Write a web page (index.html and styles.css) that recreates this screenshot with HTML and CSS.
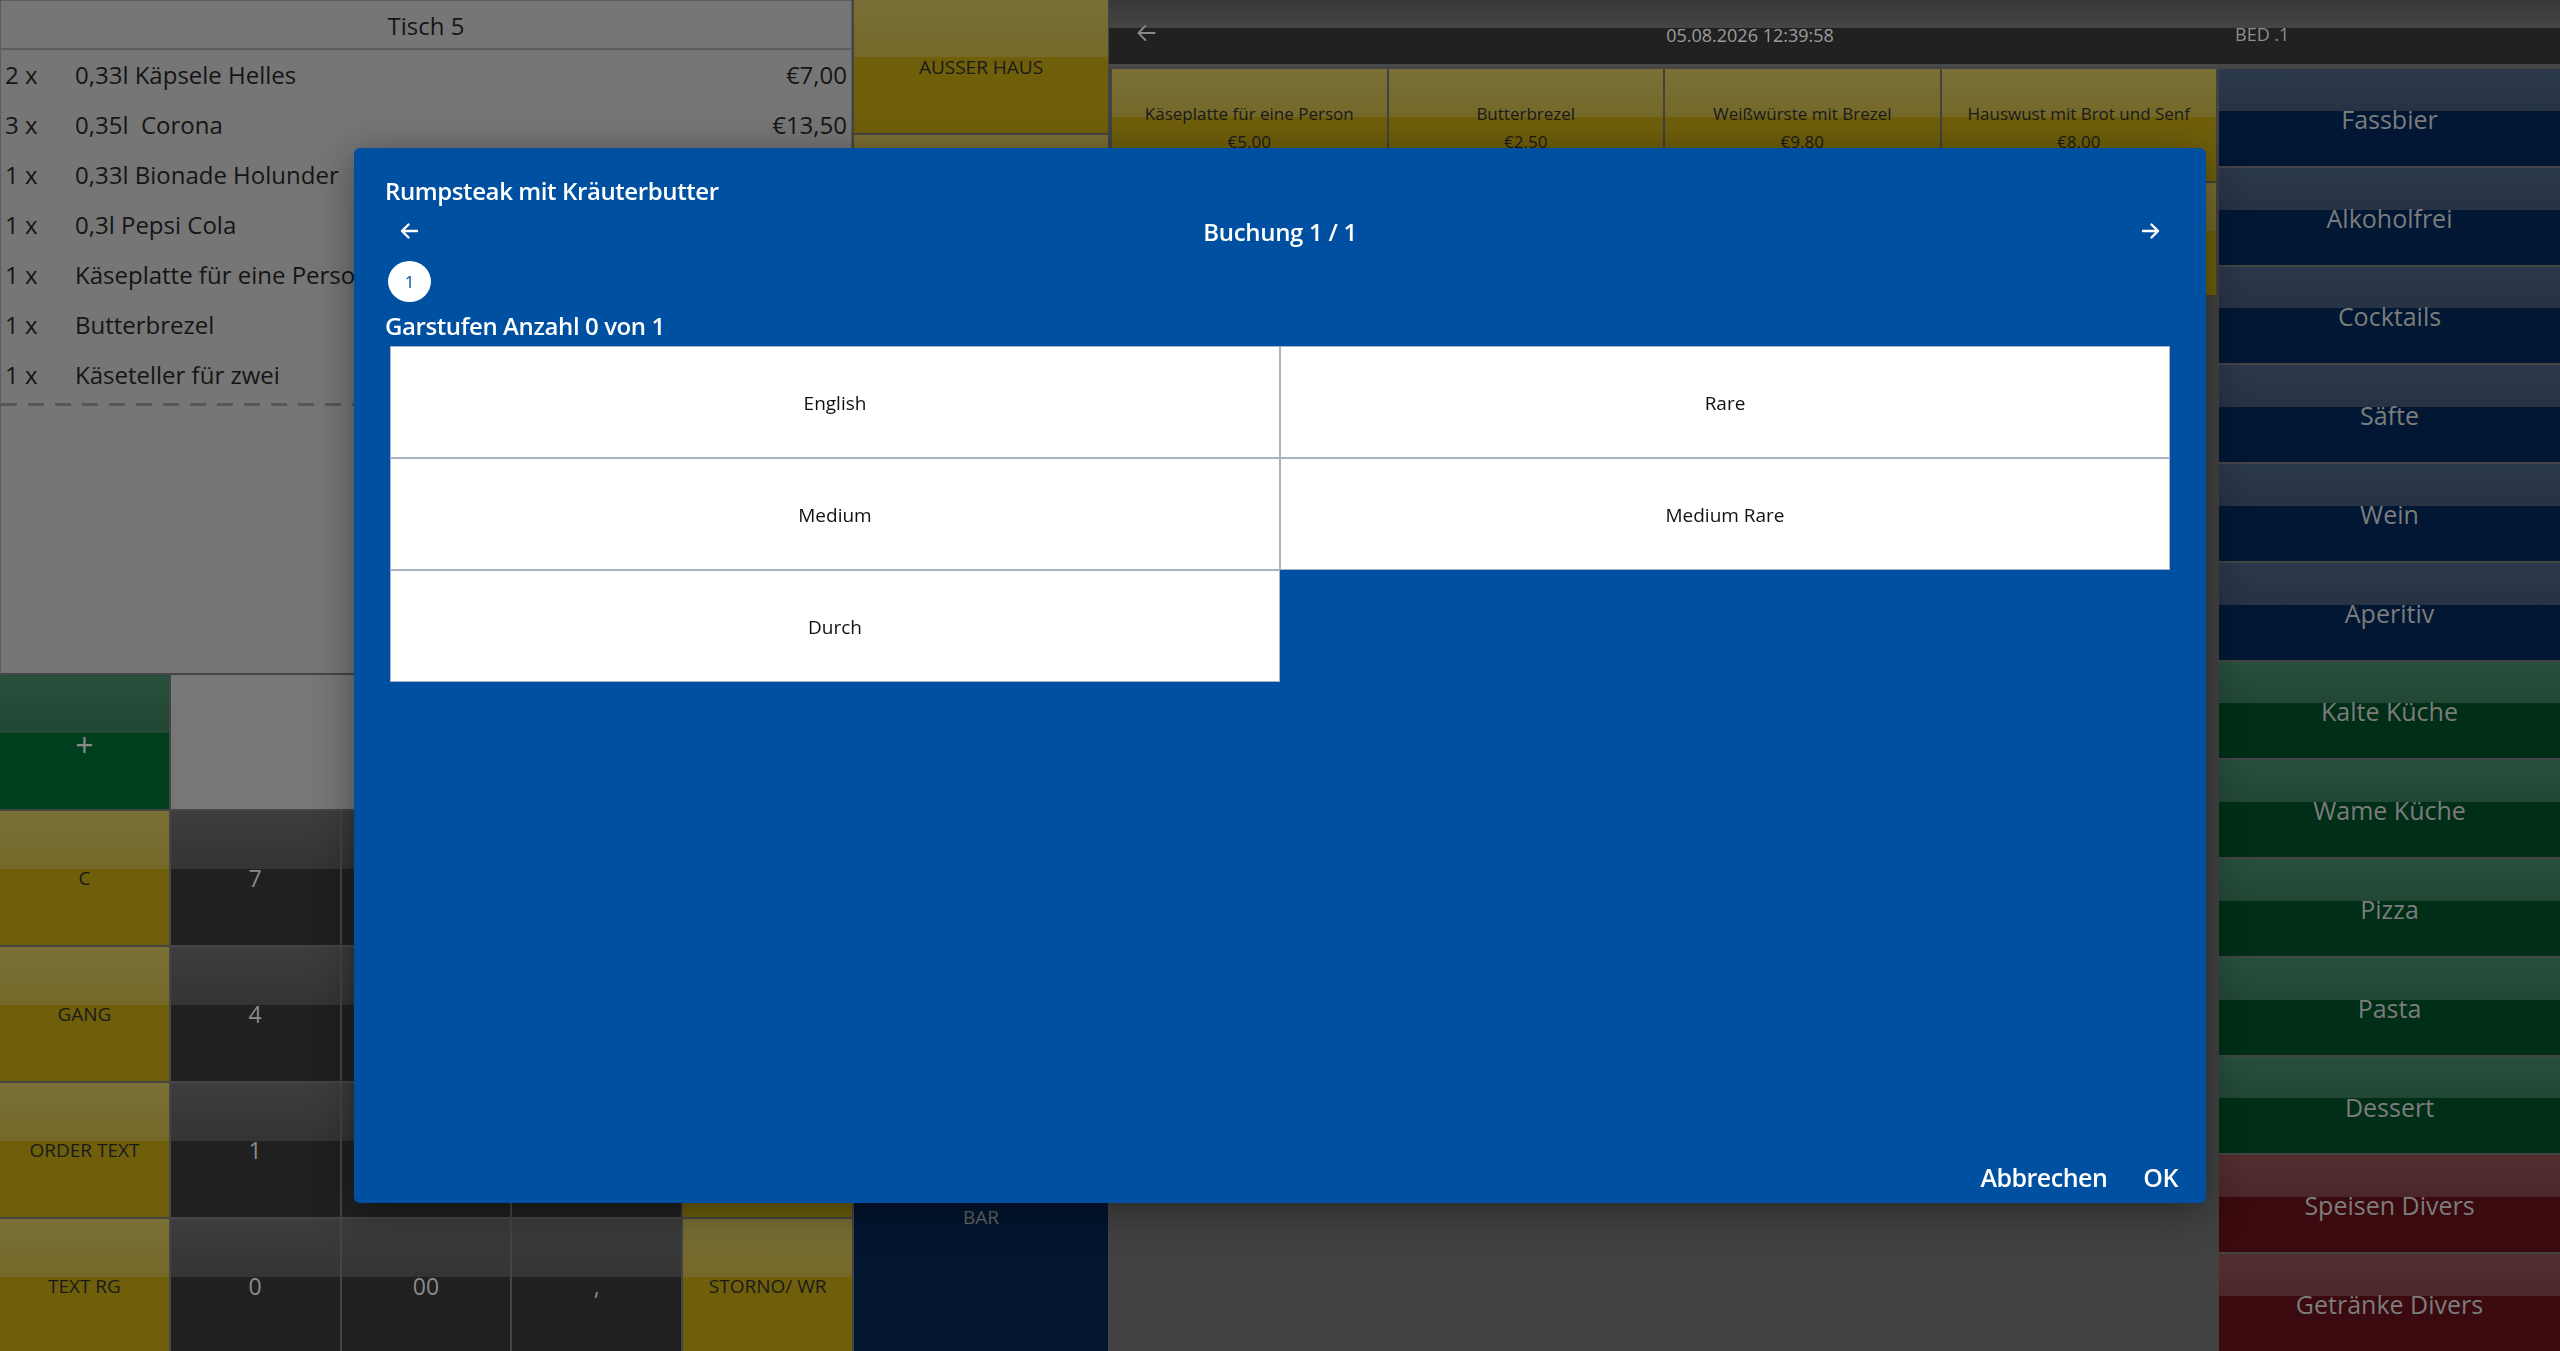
FILE: index.html
```html
<!DOCTYPE html>
<html lang="de">
<head>
  <meta charset="UTF-8">
  <title>Kasse - Tisch 5</title>
  <link rel="stylesheet" href="styles.css">
</head>
<body>
  <div class="pos">

    <!-- order + keypad -->
    <section class="left">
      <div class="order">
        <div class="order-head">Tisch 5</div>
        <ul class="lines">
          <li><span class="qty">2 x</span><span class="name">0,33l Käpsele Helles</span><span class="price">€7,00</span></li>
          <li><span class="qty">3 x</span><span class="name">0,35l&nbsp; Corona</span><span class="price">€13,50</span></li>
          <li><span class="qty">1 x</span><span class="name">0,33l Bionade Holunder</span><span class="price">€3,20</span></li>
          <li><span class="qty">1 x</span><span class="name">0,3l Pepsi Cola</span><span class="price">€2,90</span></li>
          <li><span class="qty">1 x</span><span class="name">Käseplatte für eine Person</span><span class="price">€5,00</span></li>
          <li><span class="qty">1 x</span><span class="name">Butterbrezel</span><span class="price">€2,50</span></li>
          <li><span class="qty">1 x</span><span class="name">Käseteller für zwei</span><span class="price">€9,50</span></li>
        </ul>
        <div class="dash"></div>
      </div>

      <div class="keys">
        <button class="key green plus">+</button>
        <div class="display"></div>

        <button class="key gold">C</button>
        <button class="key num">7</button>
        <button class="key num">8</button>
        <button class="key num">9</button>
        <button class="key gold">MENGE</button>

        <button class="key gold">GANG</button>
        <button class="key num">4</button>
        <button class="key num">5</button>
        <button class="key num">6</button>
        <button class="key gold">PREIS</button>

        <button class="key gold">ORDER TEXT</button>
        <button class="key num">1</button>
        <button class="key num">2</button>
        <button class="key num">3</button>
        <button class="key gold">SPLIT</button>

        <button class="key gold">TEXT RG</button>
        <button class="key num">0</button>
        <button class="key num">00</button>
        <button class="key num">,</button>
        <button class="key gold">STORNO/ WR</button>
      </div>
    </section>

    <!-- function column -->
    <section class="mid">
      <button class="key gold">AUSSER HAUS</button>
      <button class="key gold">TISCH</button>
      <button class="key gold">UMBUCHEN</button>
      <button class="key gold">RABATT</button>
      <button class="key gold">BON</button>
      <button class="key gold">ZWISCHEN</button>
      <button class="key gold">RECHNUNG</button>
      <button class="key gold">KARTE</button>
      <button class="key bar">BAR</button>
    </section>

    <section class="main">
      <header class="topbar">
        <span class="tb-back">
          <svg viewBox="0 0 24 24" width="26" height="26"><path d="M20 12H5M11.5 5.5 5 12l6.5 6.5" fill="none" stroke="currentColor" stroke-width="1.7" stroke-linecap="round" stroke-linejoin="round"/></svg>
        </span>
        <span class="tb-date">05.08.2026 12:39:58</span>
        <span class="tb-user">BED .1</span>
      </header>

      <div class="work">
        <div class="products">
          <button class="key gold item"><span>Käseplatte für eine Person</span><span>€5.00</span></button>
          <button class="key gold item"><span>Butterbrezel</span><span>€2.50</span></button>
          <button class="key gold item"><span>Weißwürste mit Brezel</span><span>€9.80</span></button>
          <button class="key gold item"><span>Hauswust mit Brot und Senf</span><span>€8.00</span></button>
          <button class="key gold item"><span>Obatzda mit Brezel</span><span>€6.50</span></button>
          <button class="key gold item"><span>Wurstsalat</span><span>€7.20</span></button>
          <button class="key gold item"><span>Leberkäse mit Ei</span><span>€8.40</span></button>
          <button class="key gold item"><span>Brotzeitbrett</span><span>€12.00</span></button>
        </div>

        <nav class="groups">
          <button class="key navy">Fassbier</button>
          <button class="key navy">Alkoholfrei</button>
          <button class="key navy">Cocktails</button>
          <button class="key navy">Säfte</button>
          <button class="key navy">Wein</button>
          <button class="key navy">Aperitiv</button>
          <button class="key green">Kalte Küche</button>
          <button class="key green">Wame Küche</button>
          <button class="key green">Pizza</button>
          <button class="key green">Pasta</button>
          <button class="key green">Dessert</button>
          <button class="key red">Speisen Divers</button>
          <button class="key red">Getränke Divers</button>
        </nav>
      </div>
    </section>
  </div>

  <!-- Garstufen dialog -->
  <div class="modal">
    <div class="dialog">
      <div class="dlg-title">Rumpsteak mit Kräuterbutter</div>
      <div class="dlg-nav">
        <button class="arrow">
          <svg viewBox="0 0 24 24" width="24" height="24"><path d="M20 12H5M11.5 5.5 5 12l6.5 6.5" fill="none" stroke="currentColor" stroke-width="2.4" stroke-linecap="round" stroke-linejoin="round"/></svg>
        </button>
        <span class="dlg-count">Buchung 1 / 1</span>
        <button class="arrow next">
          <svg viewBox="0 0 24 24" width="24" height="24"><path d="M4 12h15M12.5 5.5 19 12l-6.5 6.5" fill="none" stroke="currentColor" stroke-width="2.4" stroke-linecap="round" stroke-linejoin="round"/></svg>
        </button>
      </div>
      <div class="step">1</div>
      <div class="dlg-label">Garstufen Anzahl 0 von 1</div>
      <div class="options">
        <button class="opt">English</button>
        <button class="opt">Rare</button>
        <button class="opt">Medium</button>
        <button class="opt">Medium Rare</button>
        <button class="opt">Durch</button>
      </div>
      <div class="dlg-foot">
        <button class="link">Abbrechen</button>
        <button class="link">OK</button>
      </div>
    </div>
  </div>
</body>
</html>
```

FILE: styles.css
```css
body {
  margin: 0;
  width: 2560px;
  height: 1351px;
  overflow: hidden;
  background: #454545;
  font-family: "Open Sans", sans-serif;
}
button {
  font-family: inherit;
  border: none;
  padding: 0;
  margin: 0;
  cursor: pointer;
}
.pos {
  display: flex;
  height: 1351px;
}

/* glossy tiles: light upper part, flat lower part */
.key {
  background: linear-gradient(var(--hi1), var(--hi2) 43%, var(--lo) 43%);
  display: flex;
  align-items: center;
  justify-content: center;
  text-align: center;
  font-size: 19px;
}
.gold  { --hi1: #7a6f36; --hi2: #746929; --lo: #6f5f0b; color: #1a1a1a; }
.num   { --hi1: #3d3d3d; --hi2: #343434; --lo: #202020; color: #8a8a8a; font-size: 23px; }
.green { --hi1: #27503c; --hi2: #224734; --lo: #002e17; color: #7c7c7c; }
.navy  { --hi1: #2c384b; --hi2: #273245; --lo: #021733; color: #7c7c7c; }
.red   { --hi1: #542d30; --hi2: #4c272a; --lo: #3a0a0e; color: #7c7c7c; }

/* left side */
.left {
  width: 852px;
  display: flex;
  flex-direction: column;
  gap: 2px;
}
.order {
  flex: 0 0 673px;
  box-sizing: border-box;
  background: #767676;
  border: 1px solid #5c5c5c;
  border-bottom: none;
  color: #151515;
}
.order-head {
  height: 47px;
  line-height: 49px;
  text-align: center;
  font-size: 24px;
  border-bottom: 2px solid #5e5e5e;
}
.lines {
  list-style: none;
  margin: 0;
  padding: 0;
}
.lines li {
  display: flex;
  height: 50px;
  align-items: center;
  font-size: 24px;
  line-height: 30px;
  padding: 0 4px;
}
.qty {
  width: 70px;
}
.name {
  flex: 1;
  white-space: nowrap;
}
.dash {
  height: 3px;
  margin-top: 3px;
  background: repeating-linear-gradient(to right, #575757 0 16px, transparent 16px 27px);
}
.keys {
  display: grid;
  grid-template-columns: repeat(5, 1fr);
  grid-template-rows: repeat(5, 134px);
  gap: 2px;
}
.plus {
  font-size: 32px;
  color: #8a8a8a;
  padding-top: 4px;
  --lo: #003f1d;
}
.display {
  grid-column: span 4;
  background: #777;
}

/* middle column */
.mid {
  width: 254px;
  margin-left: 2px;
  display: grid;
  grid-template-rows: repeat(10, 1fr);
  gap: 2px;
}
.bar {
  grid-row: span 2;
  background: #021630;
  color: #666;
  font-size: 19px;
}

/* right side */
.main {
  flex: 1;
  margin-left: 1px;
  display: flex;
  flex-direction: column;
}
.topbar {
  height: 67px;
  box-sizing: border-box;
  padding-top: 4px;
  border-bottom: 3px solid #484848;
  background: linear-gradient(#383838, #454545 43%, #212121 43%);
  display: flex;
  align-items: center;
  font-size: 18px;
}
.tb-back {
  width: 74px;
  display: flex;
  justify-content: center;
  color: #8a8a8a;
  margin-top: -2px;
}
.tb-date {
  width: 300px;
  margin-left: 417px;
  text-align: center;
  color: #9c9c9c;
  margin-top: 2px;
}
.tb-user {
  margin-left: 335px;
  color: #8e8e8e;
}
.work {
  flex: 1;
  margin-top: 2px;
  display: flex;
  gap: 3px;
  background: #424242;
}
.products {
  width: 1104px;
  margin-left: 3px;
  display: grid;
  grid-template-columns: repeat(4, 1fr);
  grid-auto-rows: 112px;
  gap: 2px;
  align-content: start;
}
.item {
  flex-direction: column;
  font-size: 17px;
  line-height: 28px;
  padding-top: 5px;
}
.groups {
  width: 341px;
  display: grid;
  grid-template-rows: repeat(13, 1fr);
  gap: 2px;
  background: #454545;
}
.groups .key {
  font-size: 25px;
  padding-top: 3px;
}

/* dialog */
.modal {
  position: fixed;
  inset: 0;
  display: flex;
  align-items: center;
  justify-content: center;
}
.dialog {
  width: 1852px;
  height: 1055px;
  box-sizing: border-box;
  padding: 27px 28px 10px 31px;
  background: #0050a1;
  border-radius: 6px;
  box-shadow: 0 8px 40px rgba(0, 0, 0, 0.4);
  color: #fff;
  display: flex;
  flex-direction: column;
}
.dlg-title, .dlg-label {
  font-size: 24px;
  font-weight: 600;
  line-height: 32px;
  letter-spacing: -0.4px;
}
.dlg-nav {
  margin-top: 5px;
  height: 38px;
  display: flex;
  align-items: center;
  justify-content: space-between;
}
.arrow {
  width: 48px;
  height: 38px;
  background: none;
  color: #fff;
  display: flex;
  align-items: center;
  justify-content: center;
}
.arrow.next {
  margin-right: 3px;
}
.dlg-count {
  font-size: 24px;
  font-weight: 600;
  letter-spacing: -0.3px;
}
.step {
  margin: 11px 0 0 3px;
  width: 43px;
  height: 41px;
  border-radius: 50%;
  background: #fff;
  color: #0050a1;
  font-size: 17px;
  display: flex;
  align-items: center;
  justify-content: center;
}
.dlg-label {
  margin-top: 8px;
}
.options {
  margin: 4px 8px 0 5px;
  display: grid;
  grid-template-columns: 1fr 1fr;
  grid-auto-rows: 112px;
}
.opt {
  background: #fff;
  border: 1px solid #a9b2c0;
  font-size: 19px;
  color: #111;
  padding-top: 2px;
}
.dlg-foot {
  margin-top: auto;
  display: flex;
  justify-content: flex-end;
  gap: 36px;
}
.link {
  background: none;
  color: #fff;
  font-size: 25px;
  font-weight: 600;
  line-height: 32px;
  letter-spacing: -0.5px;
}
```
